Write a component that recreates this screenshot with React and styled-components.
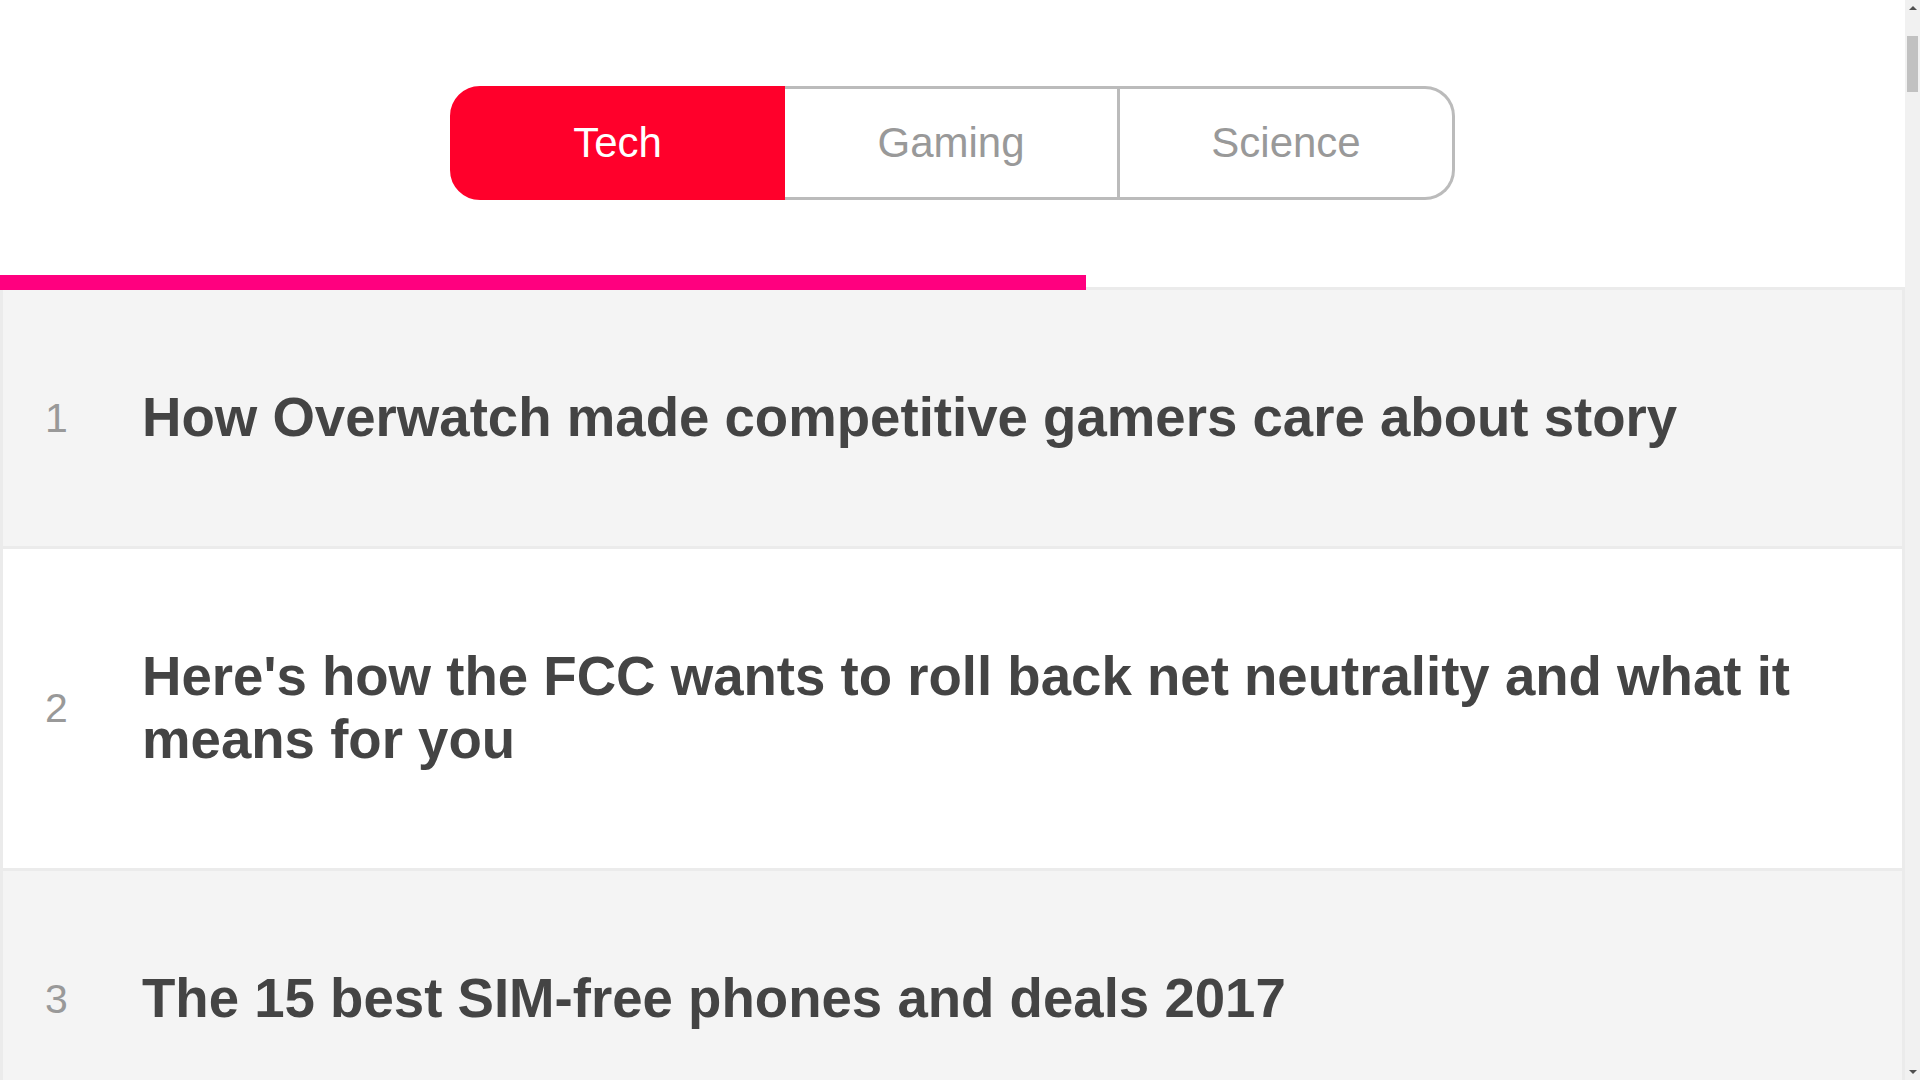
import React from "react";
import styled, { createGlobalStyle } from "styled-components";

const GlobalStyle = createGlobalStyle`
  html, body {
    margin: 0;
    padding: 0;
    background: #ffffff;
    font-family: "Liberation Sans", Arial, sans-serif;
  }
`;

const Page = styled.div`
  display: flex;
  flex-direction: column;
  width: calc(100% - 15px);
`;

// stand-in for the browser's classic scrollbar seen in the capture
const ScrollTrack = styled.div`
  position: fixed;
  top: 0;
  right: 0;
  width: 15px;
  height: 100vh;
  background: #f1f1f1;
  display: flex;
  flex-direction: column;
  align-items: center;
  justify-content: space-between;
`;

const Arrow = styled.span`
  width: 0;
  height: 0;
  margin: 6px 0;
  border-left: 4px solid transparent;
  border-right: 4px solid transparent;
  border-${(p) => (p.$down ? "top" : "bottom")}: 4px solid #505050;
`;

const Thumb = styled.div`
  position: absolute;
  top: 36px;
  left: 2px;
  width: 11px;
  height: 56px;
  background: #c1c1c1;
`;

const Header = styled.header`
  display: flex;
  flex-direction: column;
  align-items: center;
  padding-top: 86px;
`;

const Tabs = styled.nav`
  display: flex;
  flex-direction: row;
`;

const Tab = styled.button`
  box-sizing: border-box;
  width: 335px;
  height: 114px;
  display: flex;
  align-items: center;
  justify-content: center;
  font-family: "Liberation Sans", Arial, sans-serif;
  font-size: 42px;
  font-weight: 400;
  color: ${(p) => (p.$active ? "#ffffff" : "#999999")};
  background: ${(p) => (p.$active ? "#ff002b" : "#ffffff")};
  border: 3px solid ${(p) => (p.$active ? "#ff002b" : "#bbbbbb")};
  border-left-width: ${(p) => (p.$first ? "3px" : "0")};
  border-radius: ${(p) =>
    p.$first ? "30px 0 0 30px" : p.$last ? "0 30px 30px 0" : "0"};
  padding: 0;
  cursor: pointer;
`;

const Track = styled.div`
  position: relative;
  align-self: stretch;
  height: 3px;
  margin-top: 87px;
  background: #ebebeb;
`;

const Bar = styled.div`
  position: absolute;
  left: 0;
  bottom: 0;
  height: 15px;
  background: #ff007f;
`;

const List = styled.ol`
  list-style: none;
  margin: 0;
  padding: 0;
  display: flex;
  flex-direction: column;
`;

const Row = styled.li`
  display: grid;
  grid-template-columns: 97px 1fr;
  align-items: center;
  padding: 96px 40px 97px 42px;
  background: ${(p) => (p.$odd ? "#f4f4f4" : "#ffffff")};
  border: 3px solid #ebebeb;
  border-top: 0;
`;

const Rank = styled.span`
  font-size: 41px;
  line-height: 46px;
  color: #999999;
`;

const Title = styled.a`
  font-size: 54.6px;
  font-weight: 700;
  line-height: 63px;
  color: #444444;
  text-decoration: none;
`;

const tabs = ["Tech", "Gaming", "Science"];

const stories = [
  "How Overwatch made competitive gamers care about story",
  "Here's how the FCC wants to roll back net neutrality and what it means for you",
  "The 15 best SIM-free phones and deals 2017",
  "Samsung Galaxy S8 review: the best-looking phone you can buy",
  "Apple's next iPhone could ditch the home button entirely",
  "Google I/O 2017: everything announced at the keynote",
  "Why your laptop battery dies so fast, and how to fix it",
  "Nintendo Switch sales pass two million worldwide",
  "The best budget 4K TVs you can buy right now",
  "Microsoft Surface Laptop hands-on: a MacBook rival with Windows 10 S",
  "WannaCry ransomware: what it is and how to protect yourself",
  "Tesla Model 3 production is about to begin",
  "Amazon Echo Show brings a touchscreen to Alexa",
  "These are the best wireless headphones of 2017",
  "Facebook's plan to read your mind, explained",
  "OnePlus 5 leak reveals dual cameras and a slimmer body",
  "Is the Mac Pro dead? Apple promises a complete rethink",
  "The best VPN services for keeping your browsing private",
  "Uber's self-driving cars are back on the road",
  "How to speed up an old Windows PC without buying anything",
  "Fitbit Alta HR review: the fitness band gets a heart",
  "Why smart home security is still a mess",
  "The best gaming laptops for every budget",
  "Netflix is testing a new way to skip the intro",
  "Sony Xperia XZ Premium brings a 4K HDR screen to your pocket",
  "What is 5G and when will you get it?",
  "Chromebooks are about to get Android apps for good",
  "The best free antivirus software of 2017",
  "Snapchat Spectacles review: fun, but are they worth it?",
  "How drones are changing the way we see the world",
  "LG G6 review: a big screen in a small body",
  "The biggest tech flops of the decade so far",
  "Raspberry Pi projects you can build this weekend",
  "Huawei P10 review: a camera phone with Leica smarts",
  "Inside the race to build the first quantum computer",
  "HTC U11 lets you squeeze your phone to launch apps",
];

export default function App() {
  return (
    <>
      <GlobalStyle />
      <Page>
        <Header>
          <Tabs>
            {tabs.map((t, i) => (
              <Tab
                key={t}
                $active={i === 0}
                $first={i === 0}
                $last={i === tabs.length - 1}
              >
                {t}
              </Tab>
            ))}
          </Tabs>
          <Track>
            <Bar style={{ width: "57%" }} />
          </Track>
        </Header>
        <List>
          {stories.map((s, i) => (
            <Row key={s} $odd={i % 2 === 0}>
              <Rank>{i + 1}</Rank>
              <Title href="#">{s}</Title>
            </Row>
          ))}
        </List>
      </Page>
      <ScrollTrack>
        <Arrow />
        <Thumb />
        <Arrow $down />
      </ScrollTrack>
    </>
  );
}
